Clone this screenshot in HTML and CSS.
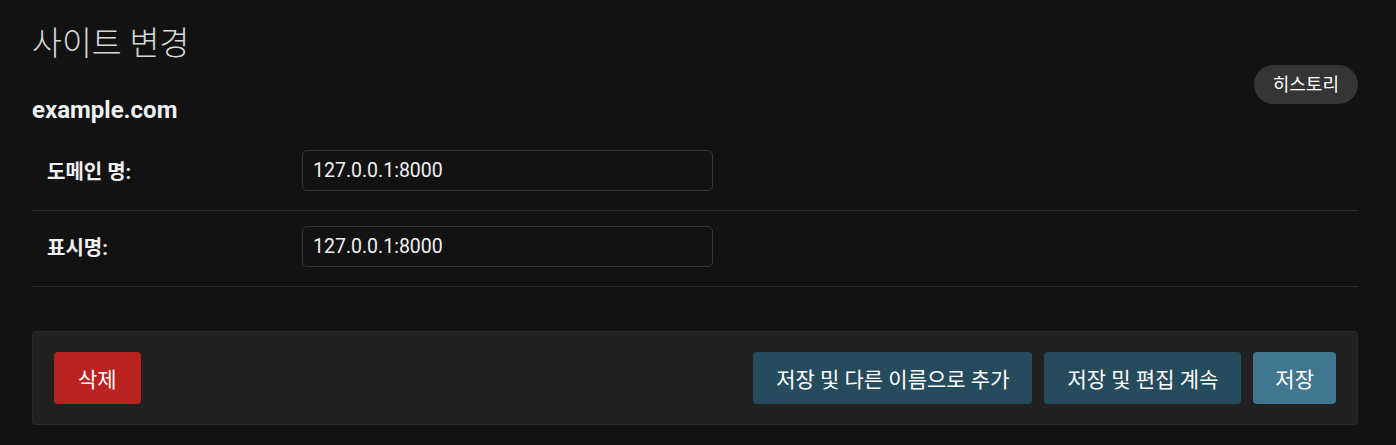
FILE: index.html
```html
<!DOCTYPE html>
<html lang="ko">
<head>
<meta charset="utf-8">
<title>사이트 변경</title>
<link rel="stylesheet" href="styles.css">
</head>
<body>
<div class="content">
  <div class="head">
    <div class="titles">
      <h1>사이트 변경</h1>
      <h2>example.com</h2>
    </div>
    <ul class="object-tools"><li><a href="#">히스토리</a></li></ul>
  </div>
  <form class="form">
    <fieldset class="module">
      <div class="form-row">
        <label class="required">도메인 명:</label>
        <input class="vtext" type="text" value="127.0.0.1:8000">
      </div>
      <div class="form-row">
        <label class="required">표시명:</label>
        <input class="vtext" type="text" value="127.0.0.1:8000">
      </div>
    </fieldset>
    <div class="submit-row">
      <a href="#" class="btn deletelink">삭제</a>
      <div class="actions">
        <button type="button" class="btn">저장 및 다른 이름으로 추가</button>
        <button type="button" class="btn">저장 및 편집 계속</button>
        <button type="button" class="btn default">저장</button>
      </div>
    </div>
  </form>
</div>
</body>
</html>
```
FILE: styles.css
```css
html, body {
  margin: 0;
  padding: 0;
  background: #121212;
  color: #eeeeee;
  font-family: Roboto, "Noto Sans CJK KR", sans-serif;
}
.content {
  padding: 22px 38px 20px 32px;
}
.head {
  display: flex;
  justify-content: space-between;
  align-items: flex-start;
}
h1 {
  margin: 0;
  font-size: 32.5px;
  font-weight: 300;
  line-height: 44px;
  color: #d8d8d8;
}
h2 {
  margin: 29px 0 0;
  font-size: 24px;
  font-weight: 700;
  line-height: 30px;
  color: #f0f0f0;
}
.object-tools {
  list-style: none;
  margin: 43px 0 0;
  padding: 0;
}
.object-tools a {
  display: block;
  height: 39px;
  line-height: 39px;
  padding: 0 19px;
  border-radius: 20px;
  background: #353535;
  color: #ffffff;
  text-decoration: none;
  font-size: 18px;
}
.form { margin: 0; }
.module {
  border: 0;
  margin: 11px 0 0;
  padding: 0;
}
.form-row {
  display: flex;
  align-items: center;
  padding: 14px 15px 19px;
  border-bottom: 1px solid #2a2a2a;
}
.form-row + .form-row {
  padding-top: 15px;
}
.form-row label {
  width: 255px;
  flex: none;
  font-weight: 700;
  font-size: 20px;
  color: #f0f0f0;
}
.vtext {
  box-sizing: border-box;
  width: 411px;
  height: 41px;
  padding: 0 10px;
  background: #121212;
  border: 1px solid #353535;
  border-radius: 5px;
  color: #f0f0f0;
  font-family: Roboto, "Noto Sans CJK KR", sans-serif;
  font-size: 19.5px;
}
.submit-row {
  display: flex;
  align-items: center;
  margin-top: 44px;
  padding: 20px 21px;
  background: #212121;
  border: 1px solid #2a2a2a;
  border-radius: 4px;
}
.actions {
  margin-left: auto;
  display: flex;
  gap: 12px;
}
.btn {
  display: flex;
  align-items: center;
  height: 52px;
  box-sizing: border-box;
  padding: 0 23px;
  border: 0;
  border-radius: 4px;
  background: #264b5d;
  color: #ffffff;
  font-family: Roboto, "Noto Sans CJK KR", sans-serif;
  font-size: 21px;
  text-decoration: none;
}
.deletelink { background: #ba2121; padding: 0 24px; }
.btn.default { background: #417690; padding: 0 22px; }
```
